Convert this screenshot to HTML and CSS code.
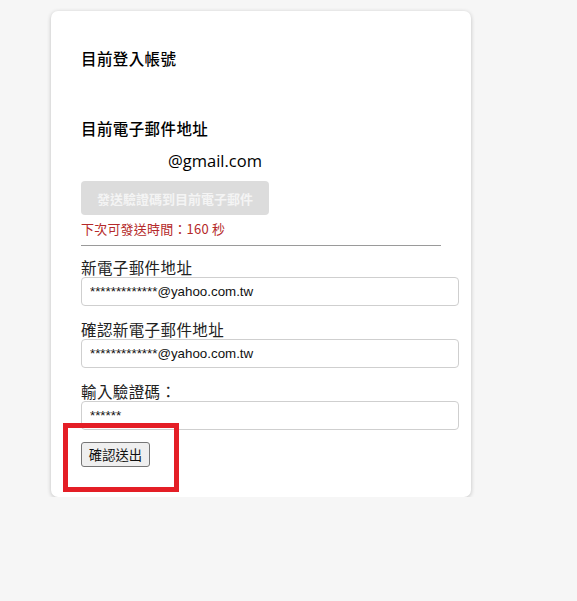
FILE: index.html
```html
<!DOCTYPE html>
<html lang="zh-Hant">
<head>
<meta charset="utf-8">
<title>變更電子郵件</title>
<link rel="stylesheet" href="styles.css">
</head>
<body>
<div class="card">
  <div class="heading">目前登入帳號</div>
  <div class="value-blank"></div>
  <div class="heading">目前電子郵件地址</div>
  <div class="email"><span class="masked"></span>@gmail.com</div>
  <button class="send-btn" disabled>發送驗證碼到目前電子郵件</button>
  <div class="countdown">下次可發送時間：160 秒</div>
  <div class="divider"></div>
  <label class="label">新電子郵件地址</label>
  <input class="field" type="text" value="*************@yahoo.com.tw">
  <label class="label">確認新電子郵件地址</label>
  <input class="field" type="text" value="*************@yahoo.com.tw">
  <label class="label">輸入驗證碼：</label>
  <input class="field" type="text" value="******">
  <div class="submit-wrap">
    <button class="submit-btn">確認送出</button>
    <div class="highlight"></div>
  </div>
</div>
</body>
</html>
```
FILE: styles.css
```css
html, body {
  margin: 0;
  padding: 0;
  background: #f6f6f6;
}
body {
  padding: 11px 0 0 51px;
  font-family: "Noto Sans CJK TC", "Noto Sans", sans-serif;
  color: #111;
}
.card {
  box-sizing: border-box;
  width: 420px;
  height: 486px;
  background: #fff;
  border-radius: 7px;
  box-shadow: 0 1px 4px rgba(0, 0, 0, 0.22);
  padding: 37px 12px 0 30px;
  display: flex;
  flex-direction: column;
  align-items: flex-start;
}
.heading {
  font-size: 15.5px;
  font-weight: 500;
  line-height: 20px;
  height: 20px;
  letter-spacing: 0.4px;
  color: #000;
}
.value-blank {
  height: 50px;
}
.email {
  font-family: "Open Sans", "Noto Sans", sans-serif;
  font-size: 16.5px;
  font-weight: 500;
  line-height: 22px;
  height: 22px;
  margin-top: 12px;
  color: #000;
  display: flex;
}
.masked {
  display: inline-block;
  width: 87px;
}
.send-btn {
  margin-top: 9px;
  width: 188px;
  height: 34px;
  border: none;
  border-radius: 4px;
  background: #dcdcdc;
  color: #f4f4f4;
  font-family: "Noto Sans CJK TC", sans-serif;
  font-size: 13px;
  font-weight: 700;
  padding: 0;
}
.countdown {
  margin-top: 5px;
  font-size: 13px;
  line-height: 18px;
  color: #b52a2a;
  letter-spacing: 0.2px;
}
.divider {
  margin-top: 7px;
  width: 360px;
  height: 1px;
  background: #9a9a9a;
}
.label {
  display: block;
  margin-top: 11px;
  font-size: 15.5px;
  line-height: 20px;
  height: 20px;
  color: #222;
  letter-spacing: 0.4px;
}
.field + .label {
  margin-top: 13px;
}
.field {
  box-sizing: border-box;
  width: 378px;
  height: 29px;
  border: 1px solid #cfcfcf;
  border-radius: 4px;
  padding: 0 8px;
  font-family: "Liberation Sans", Arial, sans-serif;
  font-size: 13.333px;
  color: #111;
  outline: none;
  margin: 0;
}
.submit-wrap {
  position: relative;
  margin-top: 12px;
}
.submit-btn {
  display: block;
  box-sizing: border-box;
  width: 69px;
  height: 25px;
  background: #efefef;
  border: 1px solid #767676;
  border-radius: 3px;
  font-family: "Noto Sans CJK TC", sans-serif;
  font-size: 13.333px;
  color: #111;
  padding: 0;
}
.highlight {
  position: absolute;
  left: -18px;
  top: -19px;
  width: 116px;
  height: 69px;
  box-sizing: border-box;
  border: 5px solid #e41e26;
}
```
